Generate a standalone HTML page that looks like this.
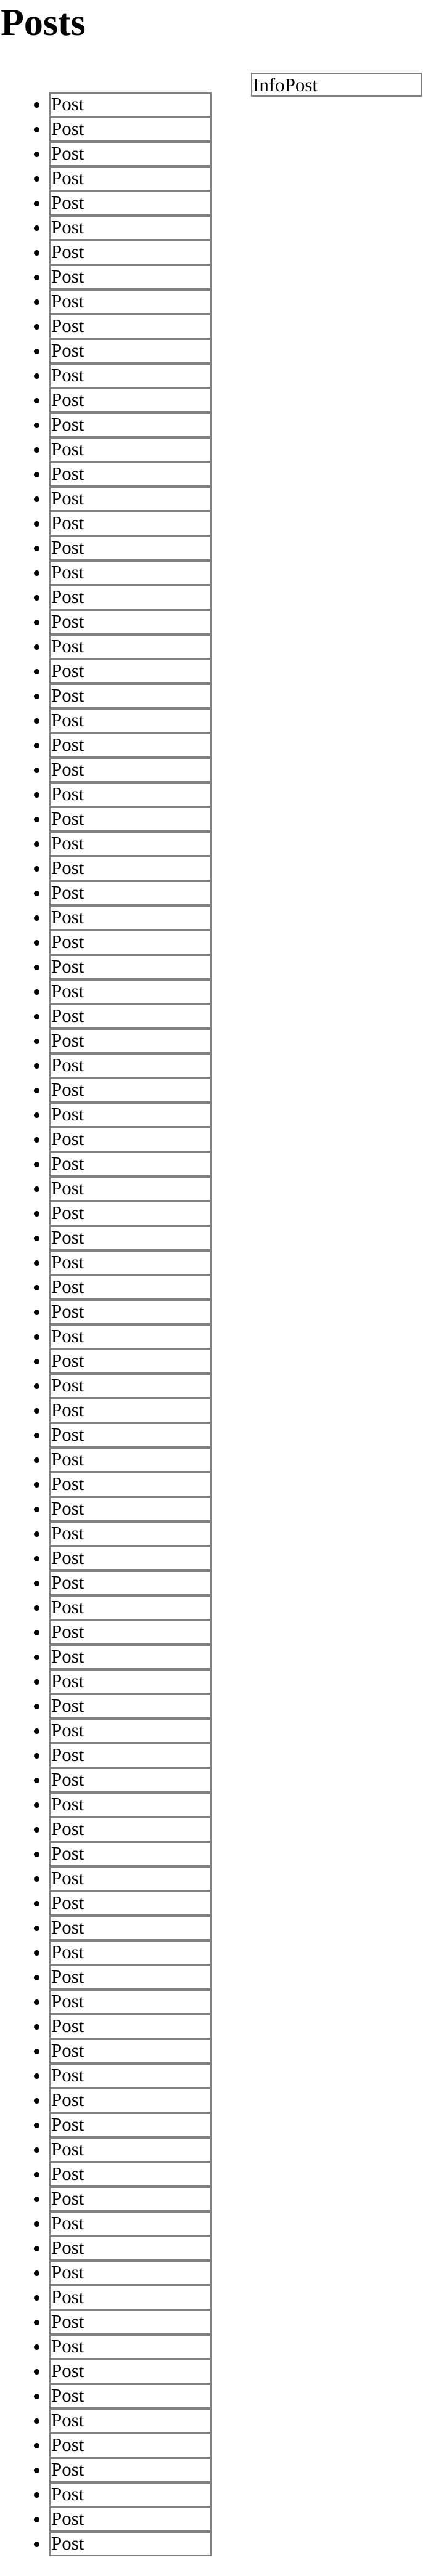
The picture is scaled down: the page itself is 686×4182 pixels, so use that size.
<!DOCTYPE html>
<html><head><meta charset="utf-8"><style>
html,body{margin:0;padding:0;background:#fff;width:686px;height:4182px;overflow:hidden;}
body{position:relative;font-family:"Liberation Serif",serif;color:#000;}
h1{position:absolute;left:1px;top:2px;margin:0;font-size:62px;line-height:71px;font-weight:bold;}
.info{position:absolute;left:407px;top:118px;width:272px;height:35px;border:2px solid #808080;font-size:31px;line-height:35px;padding-left:1px;}
ul{position:absolute;left:0;top:150px;margin:0;padding:0 0 0 80px;width:263px;list-style:disc;font-size:31px;}
li{box-sizing:border-box;height:40px;border:2px solid #808080;line-height:34px;padding-left:1px;}
li::marker{font-size:31px;}
</style></head><body>
<h1>Posts</h1>
<div class="info">InfoPost</div>
<ul>
<li>Post</li><li>Post</li><li>Post</li><li>Post</li><li>Post</li><li>Post</li><li>Post</li><li>Post</li><li>Post</li><li>Post</li>
<li>Post</li><li>Post</li><li>Post</li><li>Post</li><li>Post</li><li>Post</li><li>Post</li><li>Post</li><li>Post</li><li>Post</li>
<li>Post</li><li>Post</li><li>Post</li><li>Post</li><li>Post</li><li>Post</li><li>Post</li><li>Post</li><li>Post</li><li>Post</li>
<li>Post</li><li>Post</li><li>Post</li><li>Post</li><li>Post</li><li>Post</li><li>Post</li><li>Post</li><li>Post</li><li>Post</li>
<li>Post</li><li>Post</li><li>Post</li><li>Post</li><li>Post</li><li>Post</li><li>Post</li><li>Post</li><li>Post</li><li>Post</li>
<li>Post</li><li>Post</li><li>Post</li><li>Post</li><li>Post</li><li>Post</li><li>Post</li><li>Post</li><li>Post</li><li>Post</li>
<li>Post</li><li>Post</li><li>Post</li><li>Post</li><li>Post</li><li>Post</li><li>Post</li><li>Post</li><li>Post</li><li>Post</li>
<li>Post</li><li>Post</li><li>Post</li><li>Post</li><li>Post</li><li>Post</li><li>Post</li><li>Post</li><li>Post</li><li>Post</li>
<li>Post</li><li>Post</li><li>Post</li><li>Post</li><li>Post</li><li>Post</li><li>Post</li><li>Post</li><li>Post</li><li>Post</li>
<li>Post</li><li>Post</li><li>Post</li><li>Post</li><li>Post</li><li>Post</li><li>Post</li><li>Post</li><li>Post</li><li>Post</li>
</ul>
</body></html>
